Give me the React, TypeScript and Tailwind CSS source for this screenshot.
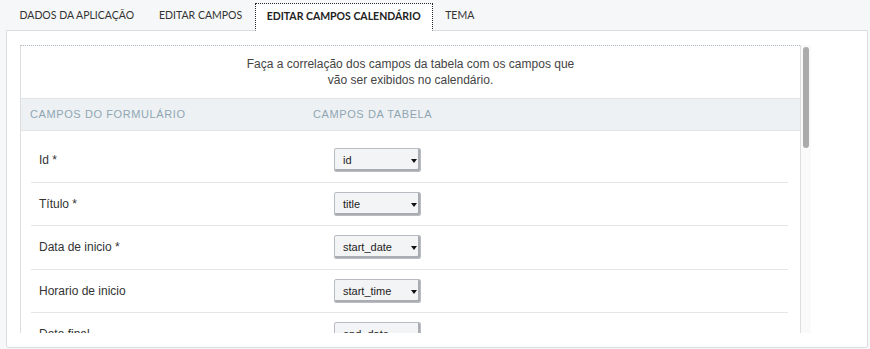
const tabs = [
  { label: 'DADOS DA APLICAÇÃO', active: false },
  { label: 'EDITAR CAMPOS', active: false },
  { label: 'EDITAR CAMPOS CALENDÁRIO', active: true },
  { label: 'TEMA', active: false },
];

const rows = [
  { name: 'Id *', value: 'id' },
  { name: 'Título *', value: 'title' },
  { name: 'Data de inicio *', value: 'start_date' },
  { name: 'Horario de inicio', value: 'start_time' },
  { name: 'Data final', value: 'end_date' },
];

function FakeSelect({ value }: { value: string }) {
  return (
    <div className="relative flex h-[24px] w-[87px] items-center rounded-[2px] border border-[#b9bdc3] bg-[#f3f4f6] pl-[8px] text-[11px] text-[#222] shadow-[inset_-2px_-2px_0_#a9adb2]">
      {value}
      <span className="absolute right-[3px] top-[10px] h-0 w-0 border-x-[3px] border-t-[4px] border-x-transparent border-t-[#111]" />
    </div>
  );
}

export default function App() {
  return (
    <div className="h-[349px] w-[870px] overflow-hidden bg-[#f6f7f8] font-['Liberation_Sans',Arial,sans-serif]">
      <div className="flex h-[30px] items-end pl-[7px] font-['Lato',sans-serif] text-[10.5px]">
        {tabs.map((t) =>
          t.active ? (
            <div
              key={t.label}
              className="relative z-10 -mb-px flex h-[28px] items-center border border-dotted border-[#222] border-b-white bg-white px-[11px] font-bold text-[#222]"
            >
              {t.label}
            </div>
          ) : (
            <div key={t.label} className="flex h-[28px] items-center px-[12.5px] text-[#333]">
              {t.label}
            </div>
          )
        )}
      </div>

      <div className="ml-[6px] h-[318px] w-[862px] rounded-b-[3px] border border-[#dcdcdc] bg-white pl-[13px] pt-[14px]">
        <div className="flex h-[288px]">
          <div className="w-[780px] overflow-hidden border-l border-t border-l-[#dedede] border-t-[#a9b6c4] [border-top-style:dotted] bg-white">
            <div className="flex h-[52px] flex-col items-center justify-center text-[12px] leading-[16px] text-[#444]">
              <span>Faça a correlação dos campos da tabela com os campos que</span>
              <span>vão ser exibidos no calendário.</span>
            </div>

            <div className="flex h-[33px] items-center border-y border-[#e2e5e8] bg-[#eef1f4] pl-[9px] text-[11px] tracking-[0.6px] text-[#8ea6b2]">
              <span className="w-[283px]">CAMPOS DO FORMULÁRIO</span>
              <span>CAMPOS DA TABELA</span>
            </div>

            <div className="ml-[10px] mr-[12px] pt-[8px]">
              {rows.map((r) => (
                <div key={r.name} className="flex h-[43.5px] items-center border-b border-[#e6e6e6] pl-[8px] text-[12px] text-[#333]">
                  <span className="w-[295px]">{r.name}</span>
                  <FakeSelect value={r.value} />
                </div>
              ))}
            </div>
          </div>

          <div className="w-[11px] border-l border-[#dedede] bg-[#fafafa] pl-[2px] pt-[2px]">
            <div className="h-[101px] w-[6px] rounded-full bg-[#ababab]" />
          </div>
        </div>
      </div>
    </div>
  );
}
